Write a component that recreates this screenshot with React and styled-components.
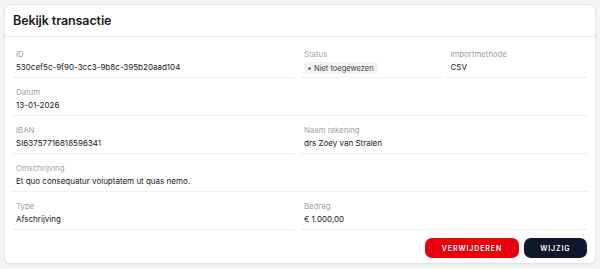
import React from "react";
import styled, { createGlobalStyle } from "styled-components";

const Global = createGlobalStyle`
  html, body { margin: 0; padding: 0; background: #f4f4f5; }
  body { font-family: Inter, "Noto Sans", sans-serif; -webkit-font-smoothing: antialiased; }
  #root { padding: 4px; }
`;

const Card = styled.div`
  box-sizing: border-box;
  width: 592px;
  height: 260px;
  background: #ffffff;
  border: 1px solid #e4e4e7;
  border-radius: 6px;
  box-shadow: 0 1px 2px rgba(0,0,0,0.04);
  display: flex;
  flex-direction: column;
`;

const Header = styled.div`
  height: 31px;
  padding: 0 8px;
  display: flex;
  align-items: center;
  border-bottom: 1px solid #ececee;
`;

const Title = styled.h2`
  margin: 0;
  font-size: 12.5px;
  font-weight: 600;
  color: #18181b;
  letter-spacing: -0.1px;
`;

const Body = styled.div`
  padding: 3px 7px 0;
`;

const Grid = styled.div`
  display: grid;
  grid-template-columns: 2fr 1fr 1fr;
  column-gap: 5px;
`;

const Field = styled.div`
  grid-column: ${(p) => p.$span || "auto"};
  box-sizing: border-box;
  height: 38px;
  padding: 8px 4px 0;
  border-bottom: 1px solid #efeff1;
  display: flex;
  flex-direction: column;
  gap: 1px;
`;

const Label = styled.div`
  font-size: 7.8px;
  line-height: 12px;
  color: #a1a1aa;
`;

const Value = styled.div`
  font-size: 8px;
  line-height: 13px;
  color: #18181b;
`;

const Badge = styled.span`
  align-self: flex-start;
  display: inline-flex;
  align-items: center;
  gap: 3px;
  height: 12px;
  padding: 0 4px;
  border-radius: 3px;
  background: #f3f4f6;
  font-size: 7.5px;
  color: #3f3f46;
  margin-top: 1px;
`;

const Dot = styled.span`
  width: 3px;
  height: 3px;
  border-radius: 50%;
  background: #71717a;
`;

const Actions = styled.div`
  display: flex;
  justify-content: flex-end;
  gap: 5px;
  padding: 8px 8px 0;
`;

const Button = styled.button`
  height: 20px;
  padding: 0 ${(p) => (p.$wide ? 16.5 : 16.5)}px;
  border: none;
  border-radius: 7px;
  background: ${(p) => (p.$danger ? "#e7000b" : "#0f172a")};
  color: #ffffff;
  font-family: Inter, sans-serif;
  font-size: 7px;
  font-weight: 600;
  letter-spacing: 0.9px;
  cursor: pointer;
`;

export default function App() {
  return (
    <>
      <Global />
      <Card>
        <Header>
          <Title>Bekijk transactie</Title>
        </Header>
        <Body>
          <Grid>
            <Field>
              <Label>ID</Label>
              <Value>530cef5c-9f90-3cc3-9b8c-395b20aad104</Value>
            </Field>
            <Field>
              <Label>Status</Label>
              <Badge>
                <Dot />
                Niet toegewezen
              </Badge>
            </Field>
            <Field>
              <Label>Importmethode</Label>
              <Value>CSV</Value>
            </Field>
            <Field $span="1 / -1">
              <Label>Datum</Label>
              <Value>13-01-2026</Value>
            </Field>
            <Field>
              <Label>IBAN</Label>
              <Value>SI63757716818596341</Value>
            </Field>
            <Field $span="span 2">
              <Label>Naam rekening</Label>
              <Value>drs Zoey van Stralen</Value>
            </Field>
            <Field $span="1 / -1">
              <Label>Omschrijving</Label>
              <Value>Et quo consequatur voluptatem ut quas nemo.</Value>
            </Field>
            <Field>
              <Label>Type</Label>
              <Value>Afschrijving</Value>
            </Field>
            <Field $span="span 2">
              <Label>Bedrag</Label>
              <Value>€ 1.000,00</Value>
            </Field>
          </Grid>
        </Body>
        <Actions>
          <Button $danger $wide>VERWIJDEREN</Button>
          <Button>WIJZIG</Button>
        </Actions>
      </Card>
    </>
  );
}
